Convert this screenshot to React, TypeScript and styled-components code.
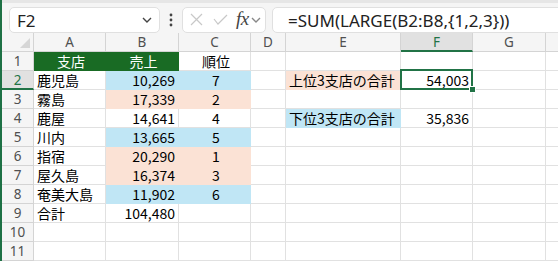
import React from 'react';
import styled, { createGlobalStyle } from 'styled-components';

const GlobalStyle = createGlobalStyle`
  html, body {
    margin: 0;
    padding: 0;
    background: #ffffff;
    overflow: hidden;
  }
`;

const GREEN = '#196b24';
const SELECT = '#217346';
const BLUE = '#c0e6f5';
const PEACH = '#fbe2d5';
const GRID = '#e1e1e1';

// H is only partly on screen, so its letter is never shown
const COLS = ['A', 'B', 'C', 'D', 'E', 'F', 'G', 'H'] as const;
type Col = (typeof COLS)[number];
const VISIBLE_LETTERS: Col[] = ['A', 'B', 'C', 'D', 'E', 'F', 'G'];

type CellSpec = {
  text?: string;
  align?: 'left' | 'center' | 'right';
  fill?: string;
  color?: string;
  selected?: boolean;
};

const head = (text: string): CellSpec => ({ text, align: 'center', fill: GREEN, color: '#ffffff' });
const num = (text: string, fill?: string): CellSpec => ({ text, align: 'right', fill });
const rank = (text: string, fill?: string): CellSpec => ({ text, align: 'center', fill });

const data: Record<number, Partial<Record<Col, CellSpec>>> = {
  1: { A: head('支店'), B: head('売上'), C: { text: '順位', align: 'center' } },
  2: {
    A: { text: '鹿児島' },
    B: num('10,269', BLUE),
    C: rank('7', BLUE),
    E: { text: '上位3支店の合計', fill: PEACH },
    F: { text: '54,003', align: 'right', selected: true },
  },
  3: { A: { text: '霧島' }, B: num('17,339', PEACH), C: rank('2', PEACH) },
  4: {
    A: { text: '鹿屋' },
    B: num('14,641'),
    C: rank('4'),
    E: { text: '下位3支店の合計', fill: BLUE },
    F: num('35,836'),
  },
  5: { A: { text: '川内' }, B: num('13,665', BLUE), C: rank('5', BLUE) },
  6: { A: { text: '指宿' }, B: num('20,290', PEACH), C: rank('1', PEACH) },
  7: { A: { text: '屋久島' }, B: num('16,374', PEACH), C: rank('3', PEACH) },
  8: { A: { text: '奄美大島' }, B: num('11,902', BLUE), C: rank('6', BLUE) },
  9: { A: { text: '合計' }, B: num('104,480') },
};

const Frame = styled.div`
  height: 261px;
  overflow: hidden;
  border-left: 2px solid #1e7145;
  display: flex;
  flex-direction: column;
`;

const FormulaBar = styled.div`
  height: 40px;
  box-sizing: border-box;
  border-top: 3px solid #e6e6e6;
  background: #f5f5f5;
  display: flex;
  align-items: flex-start;
  padding: 4px 0 0 7px;
  margin-right: -20px;
  font-family: 'Noto Sans', sans-serif;
`;

const Box = styled.div<{ $width?: number }>`
  height: 26px;
  box-sizing: border-box;
  background: #ffffff;
  border: 1px solid #e0e0e0;
  border-radius: 5px;
  display: flex;
  align-items: center;
  ${(p) => (p.$width ? `width: ${p.$width}px;` : 'flex: 1;')}
`;

const NameText = styled.span`
  flex: 1;
  padding-left: 7px;
  font-size: 17px;
  color: #222;
`;

const Dots = styled.div`
  width: 22px;
  height: 26px;
  display: flex;
  align-items: center;
  justify-content: center;
`;

const FormulaText = styled.span`
  padding-left: 15px;
  font-size: 17px;
  color: #222;
  white-space: nowrap;
`;

const Fx = styled.span`
  font-family: 'Liberation Serif', serif;
  font-style: italic;
  font-size: 19px;
  color: #444;
  margin: 0 1px 2px 7px;
  letter-spacing: -0.5px;
`;

const Sheet = styled.div`
  display: grid;
  grid-template-columns: 32px 72px 73px 72px 35px 115px 72px 73px 20px;
  grid-auto-rows: 19px;
  font-family: 'Noto Sans CJK JP', 'Noto Sans', sans-serif;
`;

const Header = styled.div<{ $active?: boolean }>`
  box-sizing: border-box;
  background: ${(p) => (p.$active ? '#e1e1e1' : '#f5f5f5')};
  border-right: 1px solid #d4d4d4;
  border-bottom: ${(p) => (p.$active ? `2px solid ${SELECT}` : '1px solid #d4d4d4')};
  color: ${(p) => (p.$active ? SELECT : '#505050')};
  font-family: 'Noto Sans', sans-serif;
  font-size: 13.5px;
  display: flex;
  align-items: center;
  justify-content: center;
`;

const Corner = styled(Header)`
  position: relative;
  &::after {
    content: '';
    position: absolute;
    right: 3px;
    bottom: 3px;
    border-style: solid;
    border-width: 0 0 10px 10px;
    border-color: transparent transparent #d6d6d6 transparent;
  }
`;

const Cell = styled.div<{ $align: string; $fill?: string; $color?: string; $selected?: boolean }>`
  position: relative;
  box-sizing: border-box;
  background: ${(p) => p.$fill || '#ffffff'};
  border-right: 1px solid ${(p) => p.$fill || GRID};
  border-bottom: 1px solid ${(p) => p.$fill || GRID};
  color: ${(p) => p.$color || '#000000'};
  font-size: 14px;
  white-space: nowrap;
  display: flex;
  align-items: center;
  justify-content: ${(p) =>
    p.$align === 'right' ? 'flex-end' : p.$align === 'center' ? 'center' : 'flex-start'};
  padding: ${(p) => (p.$align === 'right' ? '0 3px 0 0' : '0 0 0 3px')};
  ${(p) =>
    p.$selected &&
    `
    &::before {
      content: '';
      position: absolute;
      left: -1px;
      top: -2px;
      right: -1px;
      bottom: -1px;
      border: 2px solid ${SELECT};
    }
    &::after {
      content: '';
      position: absolute;
      right: -4px;
      bottom: -4px;
      width: 5px;
      height: 5px;
      background: ${SELECT};
      border: 1px solid #ffffff;
      z-index: 2;
    }
  `}
`;

const Chevron = ({ x, color }: { x: number; color: string }) => (
  <svg width="12" height="8" viewBox="0 0 12 8" style={{ marginRight: x }}>
    <path d="M2 2 L6 6 L10 2" fill="none" stroke={color} strokeWidth="1.4" />
  </svg>
);

export default function App() {
  const rowNums = Array.from({ length: 11 }, (_, i) => i + 1);
  return (
    <>
      <GlobalStyle />
      <Frame>
        <FormulaBar>
          <Box $width={151}>
            <NameText>F2</NameText>
            <Chevron x={6} color="#444" />
          </Box>
          <Dots>
            <svg width="4" height="14" viewBox="0 0 4 14">
              <circle cx="2" cy="2" r="1.4" fill="#444" />
              <circle cx="2" cy="7" r="1.4" fill="#444" />
              <circle cx="2" cy="12" r="1.4" fill="#444" />
            </svg>
          </Dots>
          <Box $width={84}>
            <svg width="24" height="14" viewBox="0 0 24 14" style={{ marginLeft: 6 }}>
              <path d="M2 1 L13 12 M13 1 L2 12" stroke="#c8c8c8" strokeWidth="1.2" fill="none" />
            </svg>
            <svg width="16" height="14" viewBox="0 0 16 14">
              <path d="M1 6 L5 11 L14 2" stroke="#c8c8c8" strokeWidth="1.2" fill="none" />
            </svg>
            <Fx>fx</Fx>
            <Chevron x={0} color="#888" />
          </Box>
          <div style={{ width: 6 }} />
          <Box>
            <FormulaText>=SUM(LARGE(B2:B8,{'{'}1,2,3{'}'}))</FormulaText>
          </Box>
        </FormulaBar>
        <Sheet>
          <Corner />
          {COLS.map((c) => (
            <Header key={c} $active={c === 'F'}>
              {VISIBLE_LETTERS.includes(c) ? c : null}
            </Header>
          ))}
          {rowNums.map((r) => (
            <React.Fragment key={r}>
              <Header $active={r === 2}>{r}</Header>
              {COLS.map((c) => {
                const spec = data[r]?.[c] ?? {};
                return (
                  <Cell
                    key={c}
                    $align={spec.align ?? 'left'}
                    $fill={spec.fill}
                    $color={spec.color}
                    $selected={spec.selected}
                  >
                    {spec.text}
                  </Cell>
                );
              })}
            </React.Fragment>
          ))}
        </Sheet>
      </Frame>
    </>
  );
}
